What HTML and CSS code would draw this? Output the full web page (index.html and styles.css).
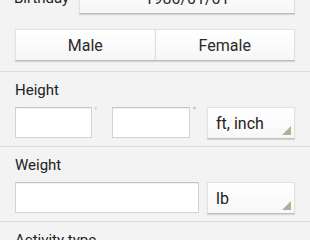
FILE: index.html
```html
<!DOCTYPE html>
<html lang="en">

<head>
    <meta charset="UTF-8">
    <meta name="viewport" content="width=device-width, initial-scale=1.0">
    <title>Profile</title>
    <link rel="stylesheet" href="styles.css">
</head>

<body>

    <div class="section first">
        <div class="birthday-row">
            <span class="row-label">Birthday</span>
            <button class="btn birthday">1980/01/01</button>
        </div>
        <div class="gender">
            <button class="btn">Male</button>
            <button class="btn">Female</button>
        </div>
    </div>

    <div class="section">
        <div class="label">Height</div>
        <div class="fields">
            <input type="text" class="field ft">
            <span class="mark">'</span>
            <input type="text" class="field inch">
            <span class="mark">"</span>
            <div class="select">ft, inch</div>
        </div>
    </div>

    <div class="section">
        <div class="label">Weight</div>
        <div class="fields">
            <input type="text" class="field wide">
            <div class="select">lb</div>
        </div>
    </div>

    <div class="section">
        <div class="label">Activity type</div>
    </div>

</body>

</html>
```

FILE: styles.css
```css
* {
    box-sizing: border-box;
}

body {
    margin: 0;
    background-color: #f3f3f3;
    font-family: Roboto, 'Noto Sans', sans-serif;
    color: #222;
    overflow: hidden;
}

.section {
    padding: 8px 15px 8px;
    border-bottom: 1px solid #dcdcdc;
}

.section.first {
    margin-top: -18px;
    padding: 0 15px 10px;
}

.birthday-row {
    display: flex;
    align-items: center;
}

.row-label {
    width: 65px;
    margin-left: -1px;
    font-size: 15px;
}

.btn {
    height: 32px;
    border: 1px solid #e2e2e2;
    border-bottom-color: #bdbdbd;
    background: linear-gradient(#ffffff, #f6f6f6);
    box-shadow: 0 1px 1px rgba(0, 0, 0, 0.12);
    font-family: Roboto, 'Noto Sans', sans-serif;
    font-size: 16px;
    color: #2a2a2a;
    padding: 0;
}

.birthday {
    flex: 1;
}

.gender {
    display: flex;
    margin-top: 15px;
}

.gender .btn {
    flex: 1;
}

.gender .btn + .btn {
    border-left-color: #dddddd;
}

.gender .btn:first-child {
    border-right: none;
}

.label {
    font-size: 15px;
    line-height: 20px;
    margin-bottom: 7px;
}

.fields {
    display: flex;
    align-items: flex-start;
    height: 31px;
}

.field {
    height: 31px;
    border: 1px solid #d2d2d2;
    border-top-color: #c4c4c4;
    background: #fff;
    box-shadow: inset 0 1px 1px rgba(0, 0, 0, 0.06);
    margin: 0;
}

.ft {
    width: 77px;
}

.inch {
    width: 78px;
}

.wide {
    flex: 1;
    margin-right: 8px;
}

.mark {
    font-size: 9px;
    line-height: 9px;
    color: #999;
    padding-left: 3px;
}

.ft + .mark {
    width: 20px;
}

.inch + .mark {
    width: 17px;
}

.select {
    position: relative;
    width: 88px;
    height: 32px;
    padding-left: 8px;
    line-height: 31px;
    font-size: 16px;
    border: 1px solid #e2e2e2;
    border-bottom-color: #c0c0c0;
    background: linear-gradient(#ffffff, #f7f7f7);
    box-shadow: 0 1px 1px rgba(0, 0, 0, 0.12);
}

.select::after {
    content: "";
    position: absolute;
    right: 3px;
    bottom: 3px;
    border-style: solid;
    border-width: 0 0 9px 9px;
    border-color: transparent transparent #aab495 transparent;
}
```
